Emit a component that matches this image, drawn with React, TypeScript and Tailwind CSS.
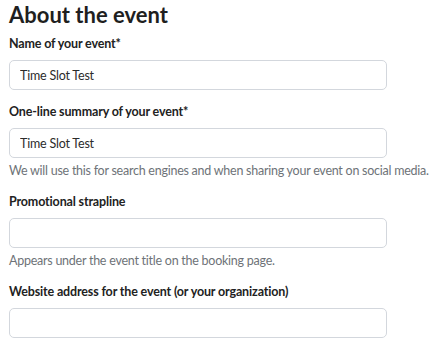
import React from "react";

type FieldProps = { label: string; value?: string; help?: string };

function Field({ label, value, help }: FieldProps) {
  return (
    <div className="flex flex-col">
      <label className="text-[12.5px] font-bold leading-[18px] tracking-[-0.15px] text-[#222]">{label}</label>
      <input
        type="text"
        defaultValue={value}
        className="mt-[7px] h-[30px] w-[378px] rounded-[5px] border border-[#d3d7dd] bg-white px-[10px] text-[12.5px] tracking-[-0.2px] text-[#2b2b2b] outline-none"
      />
      {help && (
        <p className="mt-[4px] whitespace-nowrap text-[12.5px] leading-[18px] tracking-[-0.25px] text-[#6e7378]">
          {help}
        </p>
      )}
    </div>
  );
}

export default function App() {
  return (
    <div className="flex flex-col bg-white px-[9px] font-['Lato',_'Noto_Sans',_sans-serif]">
      <h1 className="text-[22px] font-bold leading-[30px] text-[#1f1f1f]">About the event</h1>
      <div className="mt-[5px] flex flex-col gap-[13px]">
        <Field label="Name of your event*" value="Time Slot Test" />
        <Field
          label="One-line summary of your event*"
          value="Time Slot Test"
          help="We will use this for search engines and when sharing your event on social media."
        />
        <Field label="Promotional strapline" help="Appears under the event title on the booking page." />
        <Field label="Website address for the event (or your organization)" />
      </div>
    </div>
  );
}
